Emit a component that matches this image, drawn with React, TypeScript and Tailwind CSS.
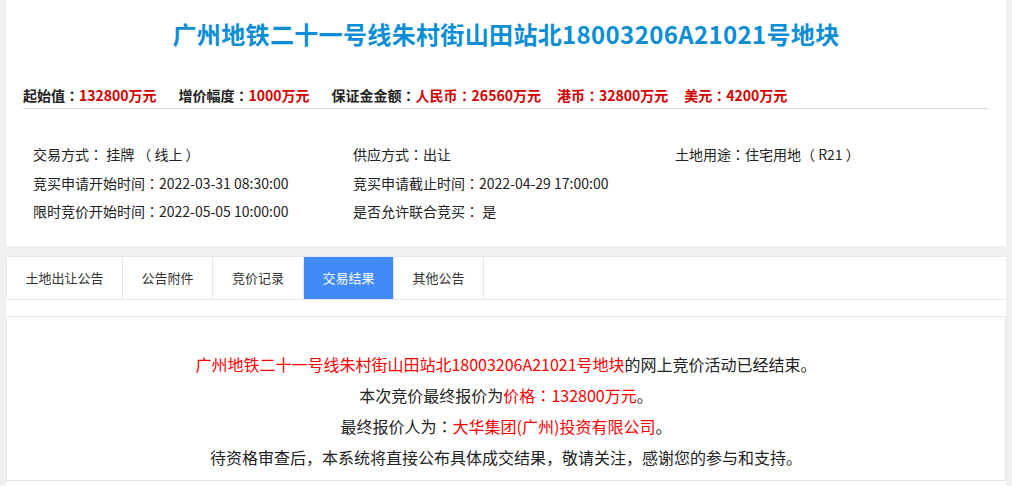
import React from "react";

const tabs: [string, string][] = [
  ["土地出让公告", "w-[116px]"],
  ["公告附件", "w-[90px]"],
  ["竞价记录", "w-[91px]"],
  ["交易结果", "w-[90px]"],
  ["其他公告", "w-[90px]"],
];

function Colon() {
  return <span className="font-['Noto_Sans_CJK_JP']">：</span>;
}

export default function App() {
  return (
    <div className="min-h-screen bg-[#f0f0f0] font-['Noto_Sans_CJK_SC','Noto_Sans',sans-serif] text-[#222]">
      <div className="mx-auto w-[1000px]">
        <div className="h-[246px] bg-white px-[17px]">
          <h1 className="pt-[19px] text-center text-[24px] font-bold leading-[30px] tracking-[0.35px] text-[#0b8ed5]">
            广州地铁二十一号线朱村街山田站北18003206A21021号地块
          </h1>
          <div className="mt-[36px] flex border-b border-[#e0e0e0] pb-[3px] text-[14px] font-bold leading-[20px]">
            <span className="mr-[22px]">
              起始值<Colon />
              <span className="text-[#d40000]">132800万元</span>
            </span>
            <span className="mr-[22px]">
              增价幅度<Colon />
              <span className="text-[#d40000]">1000万元</span>
            </span>
            <span>
              保证金金额<Colon />
              <span className="text-[#d40000]">
                人民币<Colon />
                26560万元
              </span>
              <span className="ml-[16px] text-[#d40000]">
                港币<Colon />
                32800万元
              </span>
              <span className="ml-[16px] text-[#d40000]">
                美元<Colon />
                4200万元
              </span>
            </span>
          </div>
          <div className="mt-[31px] grid grid-cols-[320px_322px_1fr] pl-[10px] text-[14px] leading-[28.5px]">
            <div>
              交易方式<Colon /> 挂牌 （ 线上 ）
            </div>
            <div>
              供应方式<Colon />出让
            </div>
            <div>
              土地用途<Colon />住宅用地（ R21 ）
            </div>
            <div>
              竞买申请开始时间<Colon />2022-03-31 08:30:00
            </div>
            <div>
              竞买申请截止时间<Colon />2022-04-29 17:00:00
            </div>
            <div></div>
            <div>
              限时竞价开始时间<Colon />2022-05-05 10:00:00
            </div>
            <div>
              是否允许联合竞买<Colon /> 是
            </div>
            <div></div>
          </div>
        </div>
        <div className="mt-[10px] bg-white pb-[6px]">
          <div className="flex h-[44px] border-y border-l border-[#e4e7ee] text-[13px]">
            {tabs.map(([t, w], i) => (
              <div
                key={t}
                className={
                  i === 3
                    ? `flex items-center justify-center border-r border-[#e4e7ee] bg-[#418bf8] text-white ${w}`
                    : `flex items-center justify-center border-r border-[#e4e7ee] text-[#333] ${w}`
                }
              >
                {t}
              </div>
            ))}
          </div>
          <div className="mt-[16px] h-[165px] border border-[#e6e6e6] pt-[32px] text-center text-[16px] leading-[31px] text-[#222]">
            <p>
              <span className="text-[#ff0000]">广州地铁二十一号线朱村街山田站北18003206A21021号地块</span>
              的网上竞价活动已经结束。
            </p>
            <p>
              本次竞价最终报价为
              <span className="text-[#ff0000]">
                价格<Colon />
                132800万元
              </span>
              。
            </p>
            <p>
              最终报价人为<Colon />
              <span className="text-[#ff0000]">大华集团(广州)投资有限公司</span>。
            </p>
            <p>待资格审查后，本系统将直接公布具体成交结果，敬请关注，感谢您的参与和支持。</p>
          </div>
        </div>
      </div>
    </div>
  );
}
